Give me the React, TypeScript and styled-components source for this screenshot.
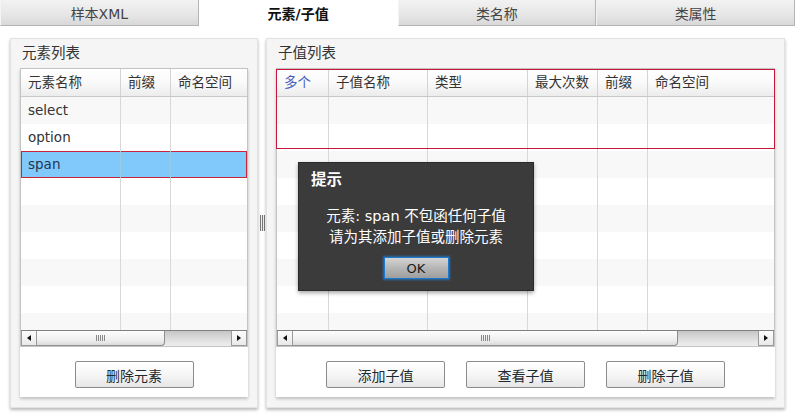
import React from 'react';
import styled, { createGlobalStyle } from 'styled-components';

const GlobalStyle = createGlobalStyle`
  body {
    margin: 0;
    background: #fff;
    font-family: "DejaVu Sans", "Noto Sans CJK SC", sans-serif;
    color: #333;
  }
`;

const Page = styled.div`
  position: relative;
  width: 795px;
  height: 418px;
  overflow: hidden;
  background: #fff;
`;

const TabBar = styled.div`
  display: flex;
  height: 26px;
`;

const Tab = styled.div<{ $active?: boolean }>`
  flex: 1;
  display: flex;
  align-items: center;
  justify-content: center;
  font-size: 14px;
  box-sizing: border-box;
  border: 1px solid ${(p) => (p.$active ? 'transparent' : '#b4b4b4')};
  border-top: none;
  border-left-color: ${(p) => (p.$active ? 'transparent' : '#f4f4f4')};
  background: ${(p) =>
    p.$active ? '#fff' : 'linear-gradient(#f2f2f2, #e6e6e6 60%, #d8d8d8)'};
  font-weight: ${(p) => (p.$active ? 'bold' : 'normal')};
  color: ${(p) => (p.$active ? '#111' : '#444')};
`;

const Content = styled.div`
  display: flex;
  align-items: flex-start;
  padding: 12px 10px 0 10px;
`;

const Panel = styled.div<{ $width?: number }>`
  ${(p) => (p.$width ? `width: ${p.$width}px;` : 'flex: 1;')}
  box-sizing: border-box;
  background: #f5f5f5;
  border: 1px solid #e2e2e2;
  box-shadow: 0 2px 3px rgba(0, 0, 0, 0.28);
  padding: 0 9px 10px 9px;
`;

const PanelTitle = styled.div`
  height: 29px;
  line-height: 28px;
  font-size: 14.5px;
  color: #333;
  padding-left: 2px;
`;

const PanelBody = styled.div`
  background: #fff;
  box-shadow: 0 2px 3px rgba(0, 0, 0, 0.22);
`;

const Splitter = styled.div`
  width: 8px;
  display: flex;
  justify-content: center;
  padding-top: 177px;
`;

const Grip = styled.div`
  width: 5px;
  height: 16px;
  background: repeating-linear-gradient(90deg, #777 0 1px, #eee 1px 2px);
`;

const Grid = styled.div`
  position: relative;
  height: 279px;
  border: 1px solid #c4c4c4;
  display: flex;
  flex-direction: column;
  box-sizing: border-box;
`;

const HeaderRow = styled.div<{ $cols: string }>`
  display: grid;
  grid-template-columns: ${(p) => p.$cols};
  height: 28px;
  flex: none;
  background: linear-gradient(#fff, #fafafa 50%, #ececec);
  border-bottom: 1px solid #c8c8c8;
  box-sizing: border-box;
`;

const HeadCell = styled.div<{ $accent?: boolean }>`
  border-right: 1px solid #d4d4d4;
  padding-left: 7px;
  font-size: 13.5px;
  line-height: 26px;
  white-space: nowrap;
  overflow: hidden;
  color: ${(p) => (p.$accent ? '#4a5fc0' : '#333')};
  &:last-child {
    border-right: none;
  }
`;

const Body = styled.div`
  flex: 1;
  overflow: hidden;
`;

const Row = styled.div<{ $cols: string; $odd: boolean; $selected?: boolean }>`
  display: grid;
  grid-template-columns: ${(p) => p.$cols};
  height: 27px;
  background: ${(p) =>
    p.$selected ? '#82c9fb' : p.$odd ? '#fff' : '#f8f8f8'};
  box-shadow: ${(p) => (p.$selected ? 'inset 0 0 0 1px #c8243a' : 'none')};
`;

const Cell = styled.div<{ $selected?: boolean }>`
  border-right: 1px solid ${(p) => (p.$selected ? '#9ccbe8' : '#d8d8d8')};
  padding-left: 7px;
  font-size: 13.5px;
  line-height: 26px;
  color: ${(p) => (p.$selected ? '#1d3550' : '#333')};
  white-space: nowrap;
  overflow: hidden;
  &:last-child {
    border-right: none;
  }
`;

const ErrorOutline = styled.div`
  position: absolute;
  top: 0;
  left: -1px;
  right: -1px;
  height: 78px;
  border: 1px solid #c8163a;
  pointer-events: none;
`;

const ScrollBar = styled.div`
  display: flex;
  height: 16px;
  flex: none;
  border-top: 1px solid #808080;
  box-sizing: border-box;
  background: linear-gradient(#c6c6c6, #e4e4e4 70%, #ededed);
`;

const ArrowButton = styled.div<{ $dir: 'left' | 'right' }>`
  width: 16px;
  height: 15px;
  flex: none;
  box-sizing: border-box;
  display: flex;
  align-items: center;
  justify-content: center;
  background: linear-gradient(#fdfdfd, #e9e9e9);
  border: 1px solid #9a9a9a;
  border-top: none;
  margin-left: ${(p) => (p.$dir === 'right' ? 'auto' : '0')};
  &::before {
    content: '';
    width: 0;
    height: 0;
    border-top: 3px solid transparent;
    border-bottom: 3px solid transparent;
    ${(p) =>
      p.$dir === 'left'
        ? 'border-right: 4px solid #111;'
        : 'border-left: 4px solid #111;'}
  }
`;

const Thumb = styled.div<{ $width: number }>`
  width: ${(p) => p.$width}px;
  height: 15px;
  box-sizing: border-box;
  border: 1px solid #8e8e8e;
  border-top: none;
  border-left: none;
  border-radius: 0 0 4px 0;
  background: linear-gradient(#fdfdfd, #f0f0f0 60%, #dcdcdc);
  display: flex;
  align-items: center;
  justify-content: center;
  &::before {
    content: '';
    width: 9px;
    height: 6px;
    background: repeating-linear-gradient(90deg, #888 0 1px, transparent 1px 2px);
  }
`;

const ButtonBar = styled.div`
  display: flex;
  justify-content: center;
  gap: 21px;
  padding: 14px 0 9px;
`;

const Button = styled.div`
  width: 119px;
  height: 27px;
  box-sizing: border-box;
  border: 1px solid #8c8c8c;
  border-radius: 2px;
  background: linear-gradient(#ffffff, #f6f6f6 50%, #e6e6e6);
  display: flex;
  align-items: center;
  justify-content: center;
  font-size: 14px;
  color: #1c2a30;
`;

const Dialog = styled.div`
  position: absolute;
  left: 298px;
  top: 162px;
  width: 236px;
  height: 129px;
  box-sizing: border-box;
  background: #3b3b3b;
  border: 1px solid #2a2a2a;
  box-shadow: 0 2px 4px rgba(0, 0, 0, 0.35);
  padding: 9px 12px 0;
  color: #fff;
`;

const DialogTitle = styled.div`
  font-size: 15.5px;
  font-weight: bold;
  line-height: 17px;
`;

const DialogMessage = styled.div`
  margin-top: 17px;
  text-align: center;
  font-size: 14.5px;
  line-height: 21px;
`;

const OkButton = styled.div`
  margin: 9px auto 0;
  width: 65px;
  height: 22px;
  box-sizing: border-box;
  border: 1px solid #1b79d0;
  box-shadow: 0 0 2px 1px rgba(40, 140, 230, 0.6);
  background: linear-gradient(#d4d4d4, #b6b6b6 50%, #9e9e9e);
  color: #1a1a1a;
  font-size: 13px;
  display: flex;
  align-items: center;
  justify-content: center;
`;

const leftCols = '100px 50px 1fr';
const rightCols = '52px 99px 100px 70px 50px 1fr';

const leftHeaders = ['元素名称', '前缀', '命名空间'];
const rightHeaders = ['多个', '子值名称', '类型', '最大次数', '前缀', '命名空间'];

const elements = ['select', 'option', 'span', '', '', '', '', '', ''];

function ScrollTrack({ thumb }: { thumb: number }) {
  return (
    <ScrollBar>
      <ArrowButton $dir="left" />
      <Thumb $width={thumb} />
      <ArrowButton $dir="right" />
    </ScrollBar>
  );
}

export default function App() {
  return (
    <Page>
      <GlobalStyle />
      <TabBar>
        <Tab>样本XML</Tab>
        <Tab $active>元素/子值</Tab>
        <Tab>类名称</Tab>
        <Tab>类属性</Tab>
      </TabBar>
      <Content>
        <Panel $width={248}>
          <PanelTitle>元素列表</PanelTitle>
          <PanelBody>
            <Grid>
              <HeaderRow $cols={leftCols}>
                {leftHeaders.map((h) => (
                  <HeadCell key={h}>{h}</HeadCell>
                ))}
              </HeaderRow>
              <Body>
                {elements.map((name, i) => {
                  const selected = name === 'span';
                  return (
                    <Row key={i} $cols={leftCols} $odd={i % 2 === 1} $selected={selected}>
                      <Cell $selected={selected}>{name}</Cell>
                      <Cell $selected={selected} />
                      <Cell $selected={selected} />
                    </Row>
                  );
                })}
              </Body>
              <ScrollTrack thumb={128} />
            </Grid>
            <ButtonBar>
              <Button>删除元素</Button>
            </ButtonBar>
          </PanelBody>
        </Panel>
        <Splitter>
          <Grip />
        </Splitter>
        <Panel>
          <PanelTitle>子值列表</PanelTitle>
          <PanelBody>
            <Grid>
              <HeaderRow $cols={rightCols}>
                {rightHeaders.map((h, i) => (
                  <HeadCell key={i} $accent={i === 0}>
                    {h}
                  </HeadCell>
                ))}
              </HeaderRow>
              <Body>
                {Array.from({ length: 9 }).map((_, i) => (
                  <Row key={i} $cols={rightCols} $odd={i % 2 === 1}>
                    {rightHeaders.map((_h, j) => (
                      <Cell key={j} />
                    ))}
                  </Row>
                ))}
              </Body>
              <ScrollTrack thumb={385} />
              <ErrorOutline />
            </Grid>
            <ButtonBar>
              <Button>添加子值</Button>
              <Button>查看子值</Button>
              <Button>删除子值</Button>
            </ButtonBar>
          </PanelBody>
        </Panel>
      </Content>
      <Dialog>
        <DialogTitle>提示</DialogTitle>
        <DialogMessage>
          元素: span 不包函任何子值
          <br />
          请为其添加子值或删除元素
        </DialogMessage>
        <OkButton>OK</OkButton>
      </Dialog>
    </Page>
  );
}
